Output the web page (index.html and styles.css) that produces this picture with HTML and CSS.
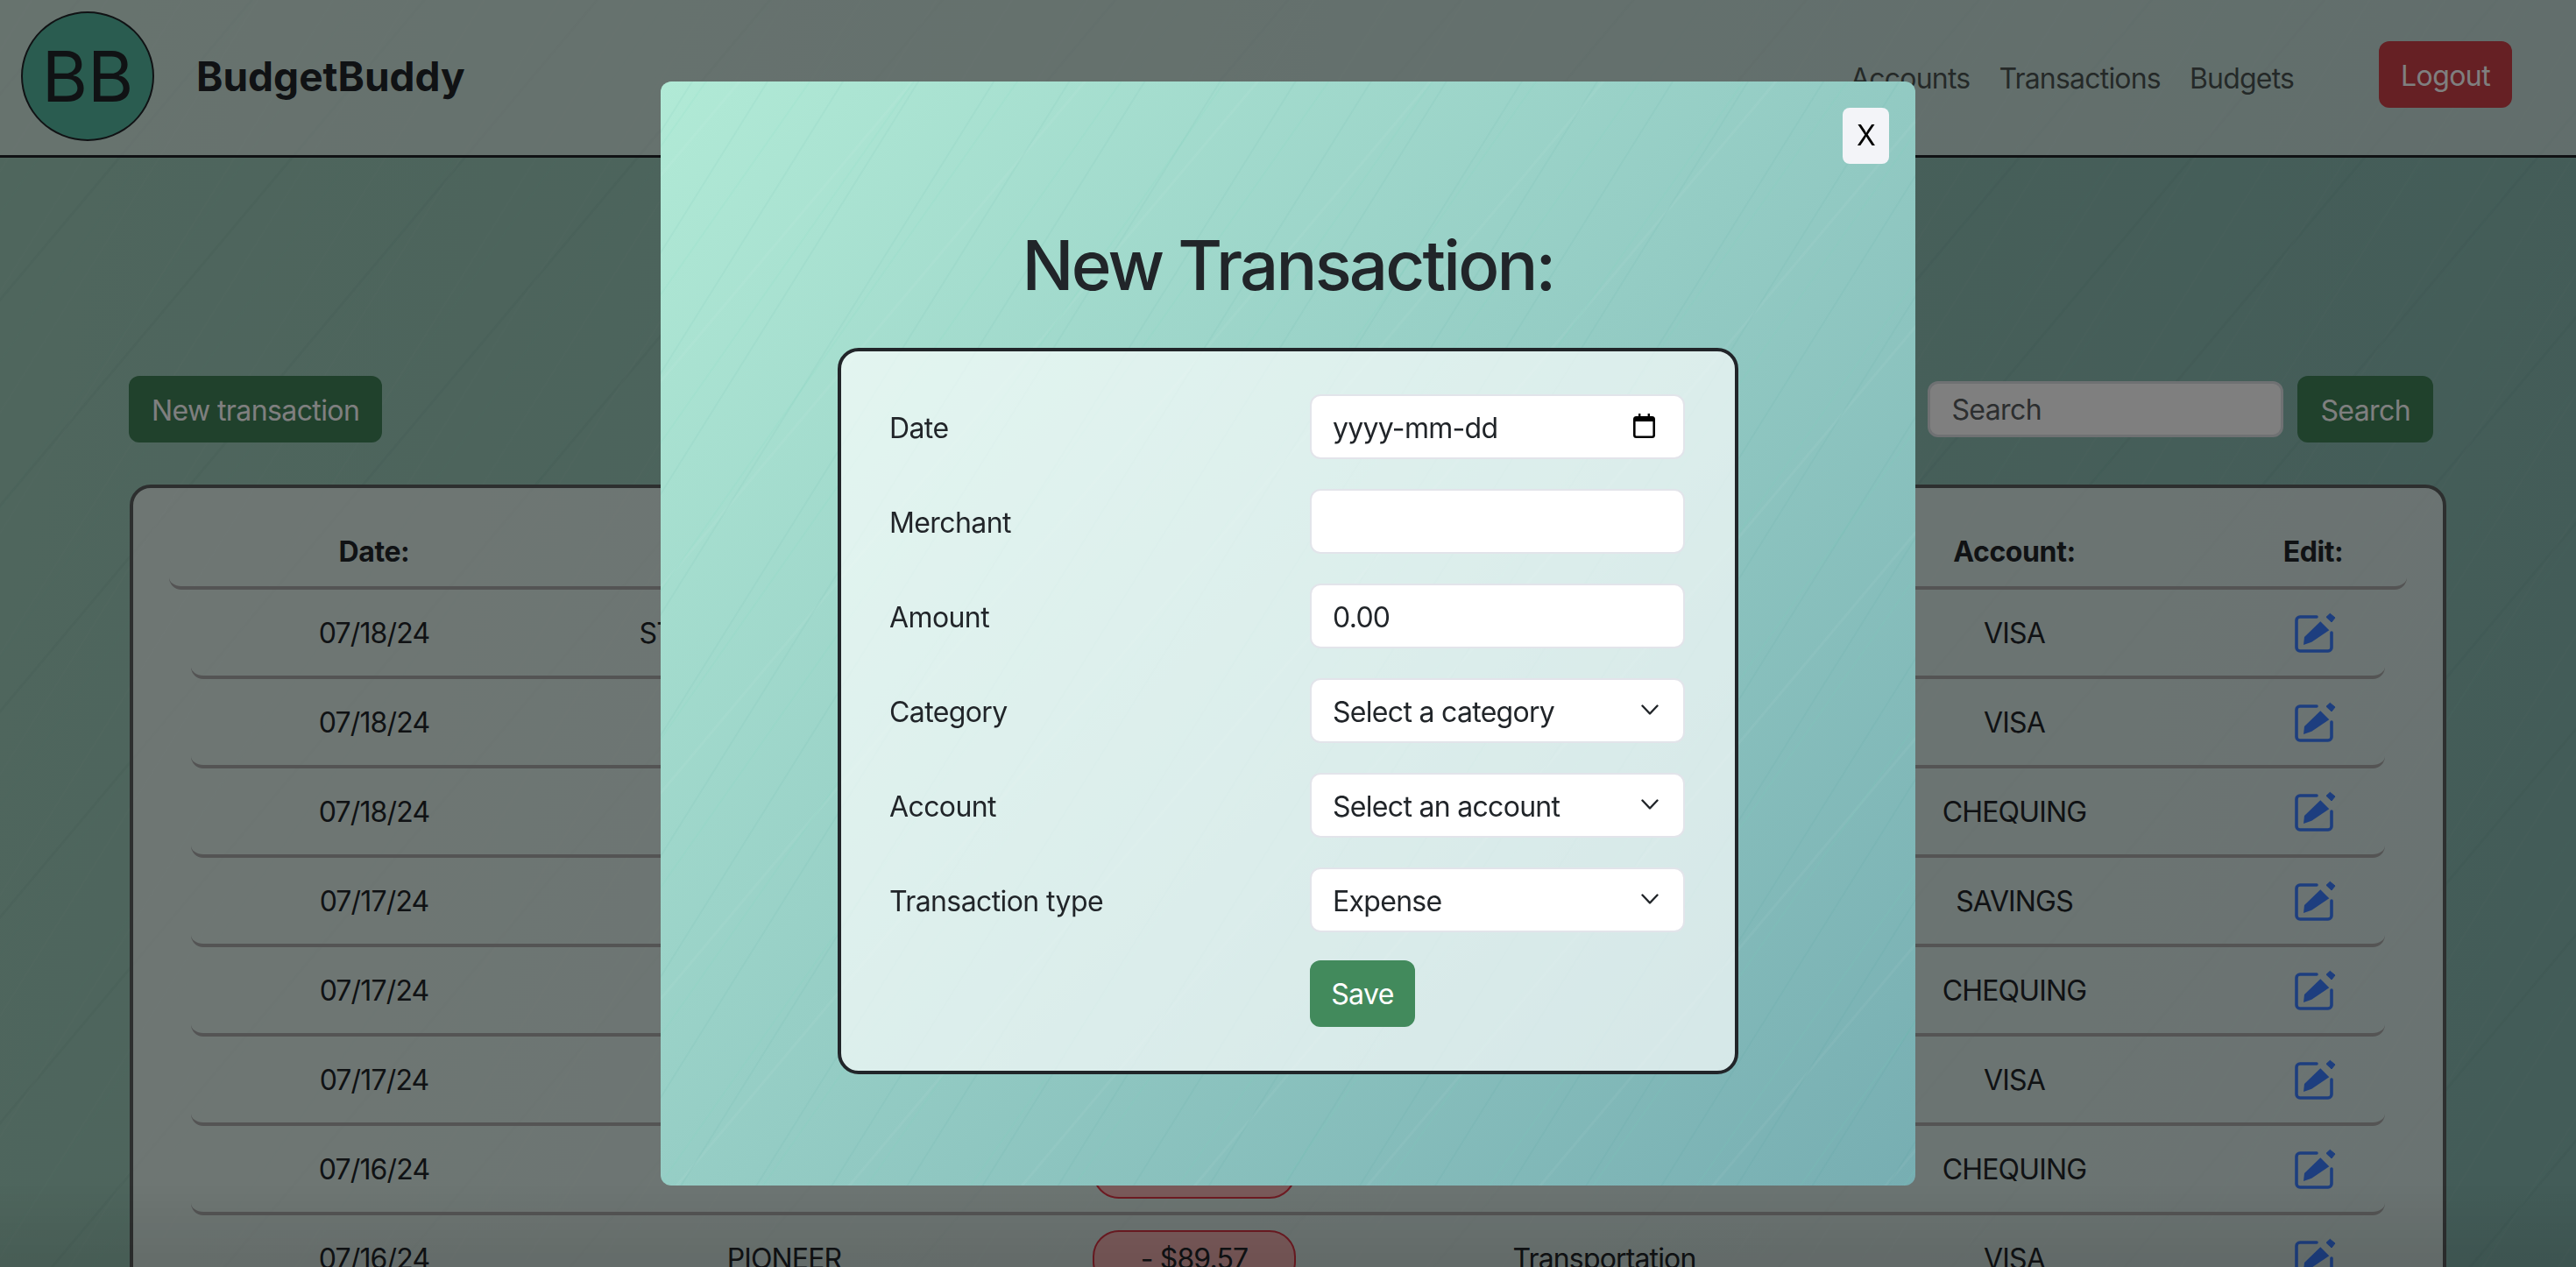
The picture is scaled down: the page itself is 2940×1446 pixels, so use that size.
FILE: index.html
```html
<!DOCTYPE html>
<html lang="en">
<head>
<meta charset="utf-8">
<title>BudgetBuddy</title>
<link rel="stylesheet" href="styles.css">
</head>
<body>
<svg class="defs" width="0" height="0" aria-hidden="true">
  <symbol id="edit" viewBox="0 0 48 48">
    <path d="M26 5H7a4 4 0 0 0-4 4v31a4 4 0 0 0 4 4h32a4 4 0 0 0 4-4V23" fill="none" stroke="currentColor" stroke-width="3.6" stroke-linecap="round"/>
    <path d="M30.3 10.3 40.3 20.3 20.3 33.7 11 37 12 28Z" fill="currentColor"/>
    <path d="M37 5.3 41.3 1.3 47 6 43 11Z" fill="currentColor" stroke="currentColor" stroke-width="1" stroke-linejoin="round"/>
  </symbol>
  <symbol id="chev" viewBox="0 0 20 12">
    <path d="M1.5 1.500 10 10.500 18.500 1.500" fill="none" stroke="currentColor" stroke-width="2.4" stroke-linecap="round" stroke-linejoin="round"/>
  </symbol>
</svg>

<header class="navbar">
  <div class="brand">
    <div class="logo">BB</div>
    <span class="brand-name">BudgetBuddy</span>
  </div>
  <nav class="nav">
    <a class="nav-link">Accounts</a>
    <a class="nav-link">Transactions</a>
    <a class="nav-link">Budgets</a>
    <button class="btn btn-logout">Logout</button>
  </nav>
</header>

<main class="main">
  <div class="toolbar">
    <button class="btn btn-green">New transaction</button>
    <div class="search">
      <div class="search-input">Search</div>
      <button class="btn btn-green">Search</button>
    </div>
  </div>

  <section class="card">
    <div class="row row-head">
      <div>Date:</div><div>Merchant:</div><div>Amount:</div><div>Category:</div><div>Account:</div><div>Edit:</div>
    </div>
    <div class="row"><div>07/18/24</div><div>STARBUCKS COFFEE 1</div><div></div><div></div><div>VISA</div><div><svg class="edit"><use href="#edit"/></svg></div></div>
    <div class="row"><div>07/18/24</div><div></div><div></div><div></div><div>VISA</div><div><svg class="edit"><use href="#edit"/></svg></div></div>
    <div class="row"><div>07/18/24</div><div></div><div></div><div></div><div>CHEQUING</div><div><svg class="edit"><use href="#edit"/></svg></div></div>
    <div class="row"><div>07/17/24</div><div></div><div></div><div></div><div>SAVINGS</div><div><svg class="edit"><use href="#edit"/></svg></div></div>
    <div class="row"><div>07/17/24</div><div></div><div></div><div></div><div>CHEQUING</div><div><svg class="edit"><use href="#edit"/></svg></div></div>
    <div class="row"><div>07/17/24</div><div></div><div></div><div></div><div>VISA</div><div><svg class="edit"><use href="#edit"/></svg></div></div>
    <div class="row"><div>07/16/24</div><div></div><div><span class="pill"></span></div><div></div><div>CHEQUING</div><div><svg class="edit"><use href="#edit"/></svg></div></div>
    <div class="row"><div>07/16/24</div><div>PIONEER</div><div><span class="pill">- $89.57</span></div><div>Transportation</div><div>VISA</div><div><svg class="edit"><use href="#edit"/></svg></div></div>
  </section>
</main>

<div class="backdrop">
  <div class="modal">
    <button class="close">X</button>
    <h1 class="modal-title">New Transaction:</h1>
    <form class="form">
      <div class="form-row">
        <label class="form-label">Date</label>
        <div class="control">
          <span>yyyy-mm-dd</span>
          <svg class="cal" viewBox="0 0 25 28" width="25" height="28"><path d="M6 0h2.400v3H16.600V0H19v3h2.500A3.500 3.500 0 0 1 25 6.500v18a3.500 3.500 0 0 1-3.500 3.500h-18A3.500 3.500 0 0 1 0 24.500v-18A3.500 3.500 0 0 1 3.500 3H6ZM2.600 9v15.500a1 1 0 0 0 1 1h17.800a1 1 0 0 0 1-1V9Z" fill="#000" fill-rule="evenodd"/></svg>
        </div>
      </div>
      <div class="form-row">
        <label class="form-label">Merchant</label>
        <div class="control"></div>
      </div>
      <div class="form-row">
        <label class="form-label">Amount</label>
        <div class="control"><span>0.00</span></div>
      </div>
      <div class="form-row">
        <label class="form-label">Category</label>
        <div class="control"><span>Select a category</span><svg class="chev"><use href="#chev"/></svg></div>
      </div>
      <div class="form-row">
        <label class="form-label">Account</label>
        <div class="control"><span>Select an account</span><svg class="chev"><use href="#chev"/></svg></div>
      </div>
      <div class="form-row">
        <label class="form-label">Transaction type</label>
        <div class="control"><span>Expense</span><svg class="chev"><use href="#chev"/></svg></div>
      </div>
      <div class="form-row form-actions">
        <span></span>
        <div><button class="btn btn-save" type="button">Save</button></div>
      </div>
    </form>
  </div>
</div>
</body>
</html>
```
FILE: styles.css
```css
* { box-sizing: border-box; }
html, body { margin: 0; height: 100%; }
body {
  height: 1446px;
  overflow: hidden;
  font-family: Inter, "Noto Sans", sans-serif;
  font-size: 32px;
  letter-spacing: -.6px;
  line-height: 48px;
  color: #212529;
  background:
    repeating-linear-gradient(125deg, rgba(255,255,255,0) 0 41px, rgba(120,225,190,.05) 42px 43px, rgba(255,255,255,0) 44px 97px),
    repeating-linear-gradient(130deg, rgba(255,255,255,0) 0 67px, rgba(0,60,60,.04) 68px 70px, rgba(255,255,255,0) 71px 151px),
    repeating-linear-gradient(122deg, rgba(255,255,255,0) 0 29px, rgba(255,255,255,.03) 30px 31px, rgba(255,255,255,0) 32px 73px),
    linear-gradient(100deg, #9fcdbb, #86b8b0);
}
.defs { position: absolute; }
button { font: inherit; letter-spacing: inherit; border: 0; cursor: pointer; }

.navbar {
  height: 180px;
  border-bottom: 3px solid #212529;
  background: rgba(255,255,255,.5);
  display: flex;
  align-items: flex-start;
  justify-content: space-between;
  padding: 13px 73px 0 24px;
}
.brand { display: flex; align-items: center; gap: 48px; }
.logo {
  width: 152px;
  height: 148px;
  border-radius: 50%;
  border: 2px solid #212529;
  background: #54b8a0;
  display: flex;
  align-items: center;
  justify-content: center;
  font-size: 80px;
  letter-spacing: 0;
  color: #212529;
}
.brand-name { font-size: 46px; font-weight: 700; letter-spacing: 0; }
.nav { display: flex; align-items: center; height: 150px; }
.nav-link { color: rgba(0,0,0,.65); margin-right: 33px; padding-top: 4px; letter-spacing: -.8px; }
.btn { border-radius: 12px; height: 76px; padding: 3px 26px 0; color: #fff; }
.btn-logout { background: #cc4048; margin-left: 64px; margin-top: -6px; padding: 3px 25px 0; }
.btn-green { background: #408258; }

.main { padding: 0 148px; }
.toolbar {
  display: flex;
  justify-content: space-between;
  align-items: center;
  margin-top: 249px;
  margin-left: -1px;
  padding-right: 15px;
}
.search { display: flex; align-items: center; gap: 16px; }
.search-input {
  width: 406px;
  height: 64px;
  padding: 2px 24px 0;
  background: #fff;
  border: 3px solid #dee2e6;
  border-radius: 12px;
  display: flex;
  align-items: center;
  color: #595c5f;
}

.card {
  margin-top: 48px;
  height: 1100px;
  padding: 0 41px;
  background: rgba(255,255,255,.65);
  border: 4px solid #5a5e5e;
  border-radius: 24px;
}
.row {
  display: grid;
  grid-template-columns: repeat(5, 468px) 1fr;
  margin: 0 25px;
  height: 102px;
  padding-top: 2px;
  align-items: center;
  text-align: center;
  border-bottom: 4px solid #a8a8a8;
  border-radius: 0 0 14px 14px;
  letter-spacing: -.85px;
}
.row > div { margin-left: -25px; margin-right: 25px; white-space: nowrap; }
.row > div:nth-child(n+6) { margin: 0; }
.row-head { margin: 0; height: 116px; font-weight: 700; padding-top: 34px; letter-spacing: -.4px; }
.row-head > div { margin: 0; }
.edit { width: 48px; height: 48px; color: #3b7dfe; display: block; margin: 0 0 0 calc(50% - 22px); }
.pill {
  display: inline-flex;
  align-items: center;
  justify-content: center;
  width: 232px;
  height: 66px;
  background: #f4b4b4;
  border: 2px solid #dc3545;
  border-radius: 30px;
  vertical-align: middle;
}

.backdrop {
  position: fixed;
  inset: 0;
  background: rgba(0,0,0,.5);
  display: flex;
  align-items: center;
  justify-content: center;
}
.backdrop::after {
  content: "";
  position: absolute;
  left: 0; right: 0; bottom: 0;
  height: 96px;
  background: linear-gradient(rgba(0,0,0,0), rgba(0,0,0,.09));
  pointer-events: none;
}
.modal {
  width: 1432px;
  height: 1260px;
  border-radius: 12px;
  padding: 30px;
  display: flex;
  flex-direction: column;
  background:
    repeating-linear-gradient(125deg, rgba(255,255,255,0) 0 41px, rgba(110,215,185,.09) 42px 43px, rgba(255,255,255,0) 44px 97px),
    repeating-linear-gradient(130deg, rgba(255,255,255,0) 0 67px, rgba(255,255,255,.045) 68px 70px, rgba(255,255,255,0) 71px 151px),
    repeating-linear-gradient(122deg, rgba(255,255,255,0) 0 29px, rgba(0,120,110,.04) 30px 31px, rgba(255,255,255,0) 32px 73px),
    linear-gradient(135deg, #b1ead6, #77aeb2);
}
.close {
  align-self: flex-end;
  width: 53px;
  height: 64px;
  padding: 0;
  background: #f3f4f8;
  border-radius: 8px;
  color: #000;
}
.modal-title {
  margin: 68px 0 46px;
  font-size: 78px;
  line-height: 96px;
  letter-spacing: -2.8px;
  font-weight: 500;
  text-align: center;
}
.form {
  align-self: center;
  width: 1028px;
  padding: 49px 57px 50px 55px;
  border: 4px solid #212529;
  border-radius: 24px;
  background: rgba(255,255,255,.68);
  display: flex;
  flex-direction: column;
  gap: 34px;
}
.form-row {
  display: grid;
  grid-template-columns: 480px 428px;
  align-items: center;
}
.form-label { padding-top: 3px; }
.form-actions { margin-top: -2px; }
.control {
  height: 74px;
  padding: 3px 24px 0;
  background: #fff;
  border: 2px solid #e2e4ea;
  border-radius: 12px;
  display: flex;
  align-items: center;
  justify-content: space-between;
  letter-spacing: -.7px;
}
.cal { margin-right: 8px; margin-top: -5px; }
.chev { width: 20px; height: 12px; color: #212529; margin-right: 4px; margin-top: -5px; }
.btn-save { background: #428a5c; width: 120px; padding: 1px 0 0; }
```
